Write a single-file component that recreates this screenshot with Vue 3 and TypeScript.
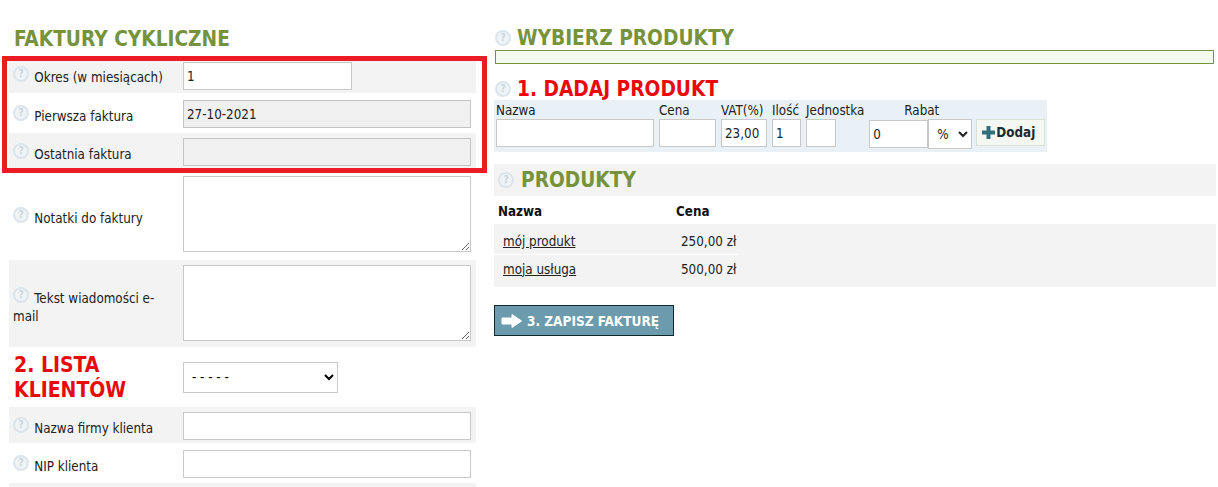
<script setup lang="ts">
const priceRows = [
  { name: 'mój produkt', price: '250,00 zł' },
  { name: 'moja usługa', price: '500,00 zł' },
]
</script>

<template>
  <div class="page">
    <section class="left">
      <h2 class="title green main-title">FAKTURY CYKLICZNE</h2>
      <div class="rows">
        <div class="row shade first">
          <label class="lbl"><span class="help">?</span> Okres (w miesiącach)</label>
          <input class="field short" value="1" />
        </div>
        <div class="row">
          <label class="lbl"><span class="help">?</span> Pierwsza faktura</label>
          <input class="field wide off" value="27-10-2021" />
        </div>
        <div class="row shade">
          <label class="lbl"><span class="help">?</span> Ostatnia faktura</label>
          <input class="field wide off" />
        </div>
        <div class="row tall">
          <label class="lbl"><span class="help">?</span> Notatki do faktury</label>
          <textarea class="field wide area"></textarea>
        </div>
        <div class="row tall shade">
          <label class="lbl"><span class="help">?</span> Tekst wiadomości e-mail</label>
          <textarea class="field wide area"></textarea>
        </div>
        <div class="row clients">
          <h2 class="title red lbl-title">2. LISTA KLIENTÓW</h2>
          <select class="field pick"><option>- - - - -</option></select>
        </div>
        <div class="row shade">
          <label class="lbl"><span class="help">?</span> Nazwa firmy klienta</label>
          <input class="field wide" />
        </div>
        <div class="row">
          <label class="lbl"><span class="help">?</span> NIP klienta</label>
          <input class="field wide" />
        </div>
        <div class="row shade"></div>
      </div>
    </section>

    <section class="right">
      <h2 class="title green head-a"><span class="help">?</span>WYBIERZ PRODUKTY</h2>
      <div class="strip"></div>
      <h2 class="title red head-b"><span class="help">?</span>1. DADAJ PRODUKT</h2>
      <div class="adder">
        <div class="col"><span>Nazwa</span><input class="field c-name" /></div>
        <div class="col"><span>Cena</span><input class="field c-price" /></div>
        <div class="col"><span>VAT(%)</span><input class="field c-vat" value="23,00" /></div>
        <div class="col"><span>Ilość</span><input class="field c-qty" value="1" /></div>
        <div class="col"><span>Jednostka</span><input class="field c-unit" /></div>
        <div class="col rabat">
          <span class="rabat-label">Rabat</span>
          <div class="rabat-fields">
            <input class="field c-disc" value="0" />
            <select class="field c-type"><option>%</option></select>
          </div>
        </div>
        <button class="add" type="button">
          <svg width="13" height="13" viewBox="0 0 13 13"><path d="M4.500 0h4v4.500H13v4H8.500V13h-4V8.500H0v-4h4.500z" fill="#33707f" /></svg>
          Dodaj
        </button>
      </div>
      <h2 class="title green band"><span class="help">?</span>PRODUKTY</h2>
      <div class="thead"><b class="t-name">Nazwa</b><b>Cena</b></div>
      <div class="tbody">
        <div v-for="item in priceRows" :key="item.name" class="trow">
          <a class="t-link">{{ item.name }}</a><span class="t-price">{{ item.price }}</span>
        </div>
      </div>
      <button class="save" type="button">
        <svg width="21" height="14" viewBox="0 0 21 14"><path d="M1 4h10V0.500L20.500 7 11 13.500V10H1z" fill="#fff" stroke="#fff" stroke-linejoin="round" /></svg>
        3. ZAPISZ FAKTURĘ
      </button>
    </section>

    <div class="frame"></div>
  </div>
</template>

<style>
body { background: #fff; }
</style>

<style scoped>
.page {
  position: relative;
  display: flex;
  width: 1218px;
  height: 487px;
  overflow: hidden;
  font-family: "DejaVu Sans", "Noto Sans", sans-serif;
  font-stretch: condensed;
  font-size: 13.300px;
  color: #222;
  box-sizing: border-box;
}
.left { width: 467px; margin-left: 9px; flex: none; }
.right { width: 722px; margin-left: 18px; flex: none; }
.title { margin: 0; font-weight: 700; font-size: 20.700px; line-height: 24px; }
.green { color: #76933c; }
.red { color: #e80a0a; }
.main-title { padding: 27px 0 0 5px; height: 30px; }
.rows { display: flex; flex-direction: column; gap: 2px; }
.row {
  display: flex;
  align-items: flex-start;
  height: 36px;
  padding-top: 5px;
  box-sizing: border-box;
}
.row.tall { height: 87px; align-items: center; padding-top: 0; }
.row.clients { height: 56px; padding-top: 0; align-items: center; }
.shade { background: #f3f3f3; }
.lbl {
  width: 170px;
  margin-left: 4px;
  flex: none;
  line-height: 18px;
  color: #222;
  padding-top: 5px;
  box-sizing: border-box;
}
.first .lbl { padding-top: 5px; margin-top: -1px; }
.tall .lbl { padding-top: 6px; padding-right: 12px; }
.lbl-title { width: 170px; margin-left: 5px; flex: none; line-height: 25px; margin-right: -1px; font-size: 21px; padding-top: 2px; }
.help {
  display: inline-block;
  box-sizing: border-box;
  width: 16px;
  height: 16px;
  border-radius: 50%;
  background: #eef3f6;
  border: 2px solid #dbe5eb;
  color: #c8d5dc;
  font-size: 10px;
  font-weight: 700;
  line-height: 12px;
  text-align: center;
  vertical-align: 5px;
  margin-right: 1.500px;
  flex: none;
}
.field {
  box-sizing: border-box;
  height: 28px;
  border: 1px solid #c8c8c8;
  background: #fff;
  font: inherit;
  font-stretch: condensed;
  font-size: 13.300px;
  color: #222;
  padding: 0 3px;
  margin: 0;
  border-radius: 0;
  outline: none;
}
.short { width: 169px; }
.wide { width: 288px; }
.off { background: #f0f0f0; border-color: #c4c4c4; }
.area { height: 76px; resize: vertical; display: block; align-self: flex-start; margin-top: 5px; }
.pick { width: 155px; height: 31px; color: #000; padding-left: 4px; }
.head-a { display: flex; align-items: center; height: 26px; margin-top: 25px; padding-left: 1px; margin-bottom: -1px; }
.head-a .help, .head-b .help { margin-right: 6px; }
.strip { height: 14px; margin: 0 2px 0 1px; border: 1px solid #76933c; background: #f3f9ec; box-sizing: border-box; }
.head-b { display: flex; align-items: center; height: 24px; margin-top: 13px; margin-bottom: -1px; padding-left: 1px; }
.adder {
  display: flex;
  width: 553px;
  height: 52px;
  background: #e9f1f6;
  padding: 3px 0 0 2px;
  box-sizing: border-box;
  gap: 5px;
}
.col { display: flex; flex-direction: column; line-height: 16px; white-space: nowrap; }
.col > span { height: 16px; display: block; }
.c-name { width: 158px; }
.c-price { width: 57px; }
.c-vat { width: 46px; }
.c-qty { width: 29px; }
.c-unit { width: 30px; }
.rabat-label { padding-left: 35px; }
.rabat-fields { display: flex; margin-top: 1px; }
.c-disc { width: 59px; height: 28px; }
.c-type { width: 44px; height: 30px; margin-top: -1px; padding: 0 0 0 4px; }
.add {
  display: flex;
  align-items: center;
  gap: 1px;
  box-sizing: border-box;
  width: 69px;
  height: 27px;
  margin: 16px 0 0 -1px;
  padding: 0 0 0 5px;
  border: 1px solid #d8e2d8;
  background: #f5f8f2;
  font: inherit;
  font-stretch: condensed;
  font-weight: 700;
  font-size: 13.300px;
  color: #1a2a30;
}
.band {
  display: flex;
  align-items: center;
  height: 32px;
  margin-top: 12px;
  padding-left: 4px;
  background: #f3f3f3;
}
.band .help { margin-right: 7px; }
.thead {
  display: flex;
  height: 28px;
  padding: 2px 0 0 4px;
  box-sizing: border-box;
  align-items: center;
  color: #111;
}
.t-name { width: 178px; }
.tbody { background: #f3f3f3; padding: 4px 0; height: 63px; box-sizing: border-box; }
.trow {
  display: flex;
  align-items: center;
  width: 244px;
  height: 27px;
  padding: 1px 0 0 9px;
  box-sizing: border-box;
  color: #222;
}
.trow:first-child { border-bottom: 1px solid #fff; }
.t-link { width: 178px; flex: none; text-decoration: underline; color: #222; }
.t-price { white-space: nowrap; }
.save {
  display: flex;
  align-items: center;
  gap: 5px;
  box-sizing: border-box;
  width: 180px;
  height: 31px;
  margin-top: 18px;
  padding: 0 0 0 6px;
  border: 1px solid #12262e;
  background: #6b9bad;
  color: #fff;
  font-family: "DejaVu Sans", sans-serif;
  font-stretch: condensed;
  font-weight: 700;
  font-size: 13.500px;
  white-space: nowrap;
}
.frame {
  position: absolute;
  left: 2px;
  top: 56px;
  width: 485px;
  height: 117px;
  border: 5px solid #ec1c24;
  box-sizing: border-box;
  pointer-events: none;
}
</style>
